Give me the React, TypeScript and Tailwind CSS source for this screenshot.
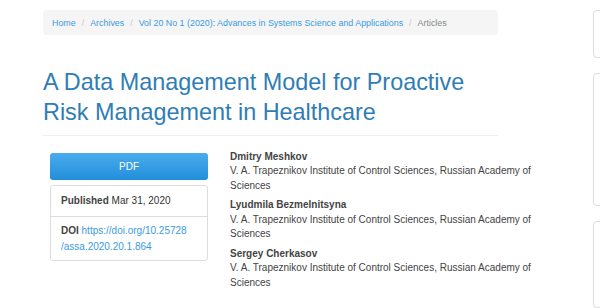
const authors = [
  { name: 'Dmitry Meshkov', aff: 'V. A. Trapeznikov Institute of Control Sciences, Russian Academy of Sciences' },
  { name: 'Lyudmila Bezmelnitsyna', aff: 'V. A. Trapeznikov Institute of Control Sciences, Russian Academy of Sciences' },
  { name: 'Sergey Cherkasov', aff: 'V. A. Trapeznikov Institute of Control Sciences, Russian Academy of Sciences' },
]

const crumbs = ['Home', 'Archives', 'Vol 20 No 1 (2020): Advances in Systems Science and Applications']

export default function App() {
  return (
    <div className="w-[600px] h-[308px] overflow-hidden bg-white flex font-['Liberation_Sans',Arial,sans-serif] text-[#333]">
      {/* Main column */}
      <div className="w-[455px] ml-[43px] shrink-0 pt-[10px]">
        {/* Breadcrumb */}
        <ol className="h-[25px] bg-[#f5f5f5] rounded-[4px] flex items-center pt-[2px] px-[9px] text-[8.9px] whitespace-nowrap">
          {crumbs.map((c) => (
            <li key={c} className="flex items-center">
              <span className="text-[#3a9be0]">{c}</span>
              <span className="text-[#c8c8c8] px-[6px]">/</span>
            </li>
          ))}
          <li className="text-[#888]">Articles</li>
        </ol>

        {/* Title */}
        <h1 className="mt-[32px] text-[23.4px] leading-[30px] text-[#2f7db5] w-[440px]">
          A Data Management Model for Proactive Risk Management in Healthcare
        </h1>
        <div className="mt-[8px] border-t border-[#eee]" />

        {/* Body */}
        <div className="flex mt-[17px]">
          <div className="w-[158px] ml-[7px] shrink-0">
            <button className="w-full h-[27px] rounded-[3px] bg-gradient-to-b from-[#4aabee] to-[#1f8fdb] text-white text-[10px]">
              PDF
            </button>
            <div className="mt-[5px] border border-[#ddd] rounded-[3px] text-[10px]">
              <div className="px-[10px] py-[8px] leading-[14px]">
                <span className="font-bold text-[#444]">Published</span> Mar 31, 2020
              </div>
              <div className="border-t border-[#ddd] px-[10px] pt-[6px] pb-[5px] leading-[16px]">
                <span className="font-bold text-[#444]">DOI</span>{' '}
                <span className="text-[#3a9be0]">
                  https://doi.org/10.25728
                  <br />
                  /assa.2020.20.1.864
                </span>
              </div>
            </div>
          </div>

          <div className="ml-[22px] w-[325px] shrink-0 text-[10px] leading-[14.5px] -mt-[3.5px] text-[#444]">
            {authors.map((a) => (
              <div key={a.name} className="mb-[5px]">
                <div className="font-bold">{a.name}</div>
                <div>{a.aff}</div>
              </div>
            ))}
          </div>
        </div>
      </div>

      {/* Sidebar edge */}
      <div className="ml-[95px] flex flex-col gap-[15px] pt-[10px] shrink-0">
        <div className="w-[40px] h-[50px] border border-[#ddd] rounded-[4px]" />
        <div className="w-[40px] h-[137px] border border-[#ddd] rounded-[4px]" />
        <div className="w-[40px] h-[90px] border border-[#ddd] rounded-[4px]" />
      </div>
    </div>
  )
}
